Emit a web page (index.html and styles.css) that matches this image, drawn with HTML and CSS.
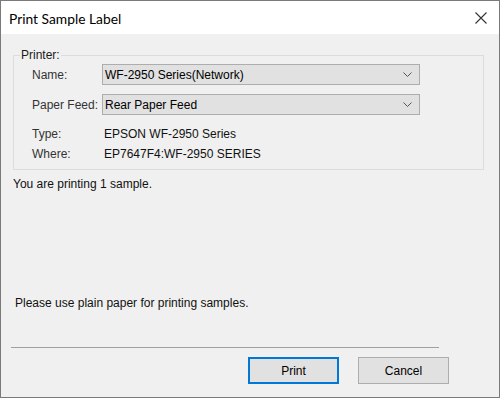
FILE: index.html
```html
<!DOCTYPE html>
<html>
<head>
<meta charset="utf-8">
<link rel="stylesheet" href="styles.css">
</head>
<body>
<div class="window">
  <div class="titlebar">
    <span class="title">Print Sample Label</span>
    <svg class="close" width="12" height="12" viewBox="0 0 12 12"><path d="M0.5 0.5 L11.5 11.5 M11.5 0.5 L0.5 11.5" stroke="#333" stroke-width="1.1" fill="none"/></svg>
  </div>
  <div class="content">
    <fieldset class="group">
      <legend>Printer:</legend>
      <div class="group-body">
        <div class="row row-select">
          <span class="lbl">Name:</span>
          <div class="select"><span>WF-2950 Series(Network)</span><svg width="9" height="5" viewBox="0 0 9 5"><path d="M0.5 0.5 L4.5 4.5 L8.5 0.5" stroke="#555" fill="none"/></svg></div>
        </div>
        <div class="row row-select row-second">
          <span class="lbl">Paper Feed:</span>
          <div class="select"><span>Rear Paper Feed</span><svg width="9" height="5" viewBox="0 0 9 5"><path d="M0.5 0.5 L4.5 4.5 L8.5 0.5" stroke="#555" fill="none"/></svg></div>
        </div>
        <div class="row row-info row-type">
          <span class="lbl">Type:</span>
          <span class="val">EPSON WF-2950 Series</span>
        </div>
        <div class="row row-info row-where">
          <span class="lbl">Where:</span>
          <span class="val">EP7647F4:WF-2950 SERIES</span>
        </div>
      </div>
    </fieldset>
    <p class="msg msg-count">You are printing 1 sample.</p>
    <p class="msg msg-paper">Please use plain paper for printing samples.</p>
    <div class="separator"></div>
    <div class="buttons">
      <button class="btn btn-default">Print</button>
      <button class="btn">Cancel</button>
    </div>
  </div>
</div>
</body>
</html>
```

FILE: styles.css
```css
html, body {
  margin: 0;
  padding: 0;
  background: #f0f0f0;
}

.window {
  width: 500px;
  height: 398px;
  box-sizing: border-box;
  border: 1px solid #7a7a7a;
  background: #f0f0f0;
  display: flex;
  flex-direction: column;
  font-family: "Liberation Sans", Arial, sans-serif;
  font-size: 12px;
  color: #1a1a1a;
}

.titlebar {
  height: 33px;
  flex: none;
  background: #ffffff;
  display: flex;
  align-items: center;
  justify-content: space-between;
  padding: 0 12px 0 8px;
}

.title {
  font-family: Lato, "Noto Sans", sans-serif;
  font-size: 13.8px;
  color: #000;
  padding-top: 1px;
}

.close {
  display: block;
  margin-top: 1px;
}

.content {
  flex: 1;
  display: flex;
  flex-direction: column;
}

.group {
  margin: 14px 15px 0 12px;
  padding: 0;
  border: 1px solid #dcdcdc;
  min-width: 0;
}

.group legend {
  margin-left: 6px;
  padding: 0 1px;
  line-height: 14px;
  font-size: 12px;
  color: #1a1a1a;
}

.group-body {
  padding: 2px 0 8px 18px;
}

.row {
  display: flex;
  align-items: center;
}

.lbl {
  width: 70px;
  flex: none;
  line-height: 14px;
  color: #333;
}

.row-select {
  height: 21px;
}

.row-second {
  margin-top: 9px;
}

.select {
  width: 318px;
  height: 21px;
  box-sizing: border-box;
  border: 1px solid #adadad;
  background: #e1e1e1;
  display: flex;
  align-items: center;
  justify-content: space-between;
  padding: 0 7px 0 2px;
  color: #000;
}

.select svg {
  display: block;
}

.row-info {
  height: 14px;
}

.row-type {
  margin-top: 12px;
}

.row-where {
  margin-top: 6px;
}

.val {
  padding-left: 2px;
  line-height: 14px;
  color: #111;
}

.msg {
  margin: 0;
  line-height: 14px;
  color: #111;
}

.msg-count {
  margin: 7px 0 0 12px;
}

.msg-paper {
  margin: 105px 0 0 14px;
}

.separator {
  height: 1px;
  background: #a0a0a0;
  margin: 37px 0 0 10px;
  width: 428px;
}

.buttons {
  display: flex;
  gap: 19px;
  margin: 9px 0 0 247px;
}

.btn {
  width: 91px;
  height: 27px;
  box-sizing: border-box;
  border: 1px solid #adadad;
  background: #e1e1e1;
  font-family: "Liberation Sans", Arial, sans-serif;
  font-size: 12px;
  color: #000;
  padding: 0;
  margin: 0;
}

.btn-default {
  border: 2px solid #0078d7;
}
```
